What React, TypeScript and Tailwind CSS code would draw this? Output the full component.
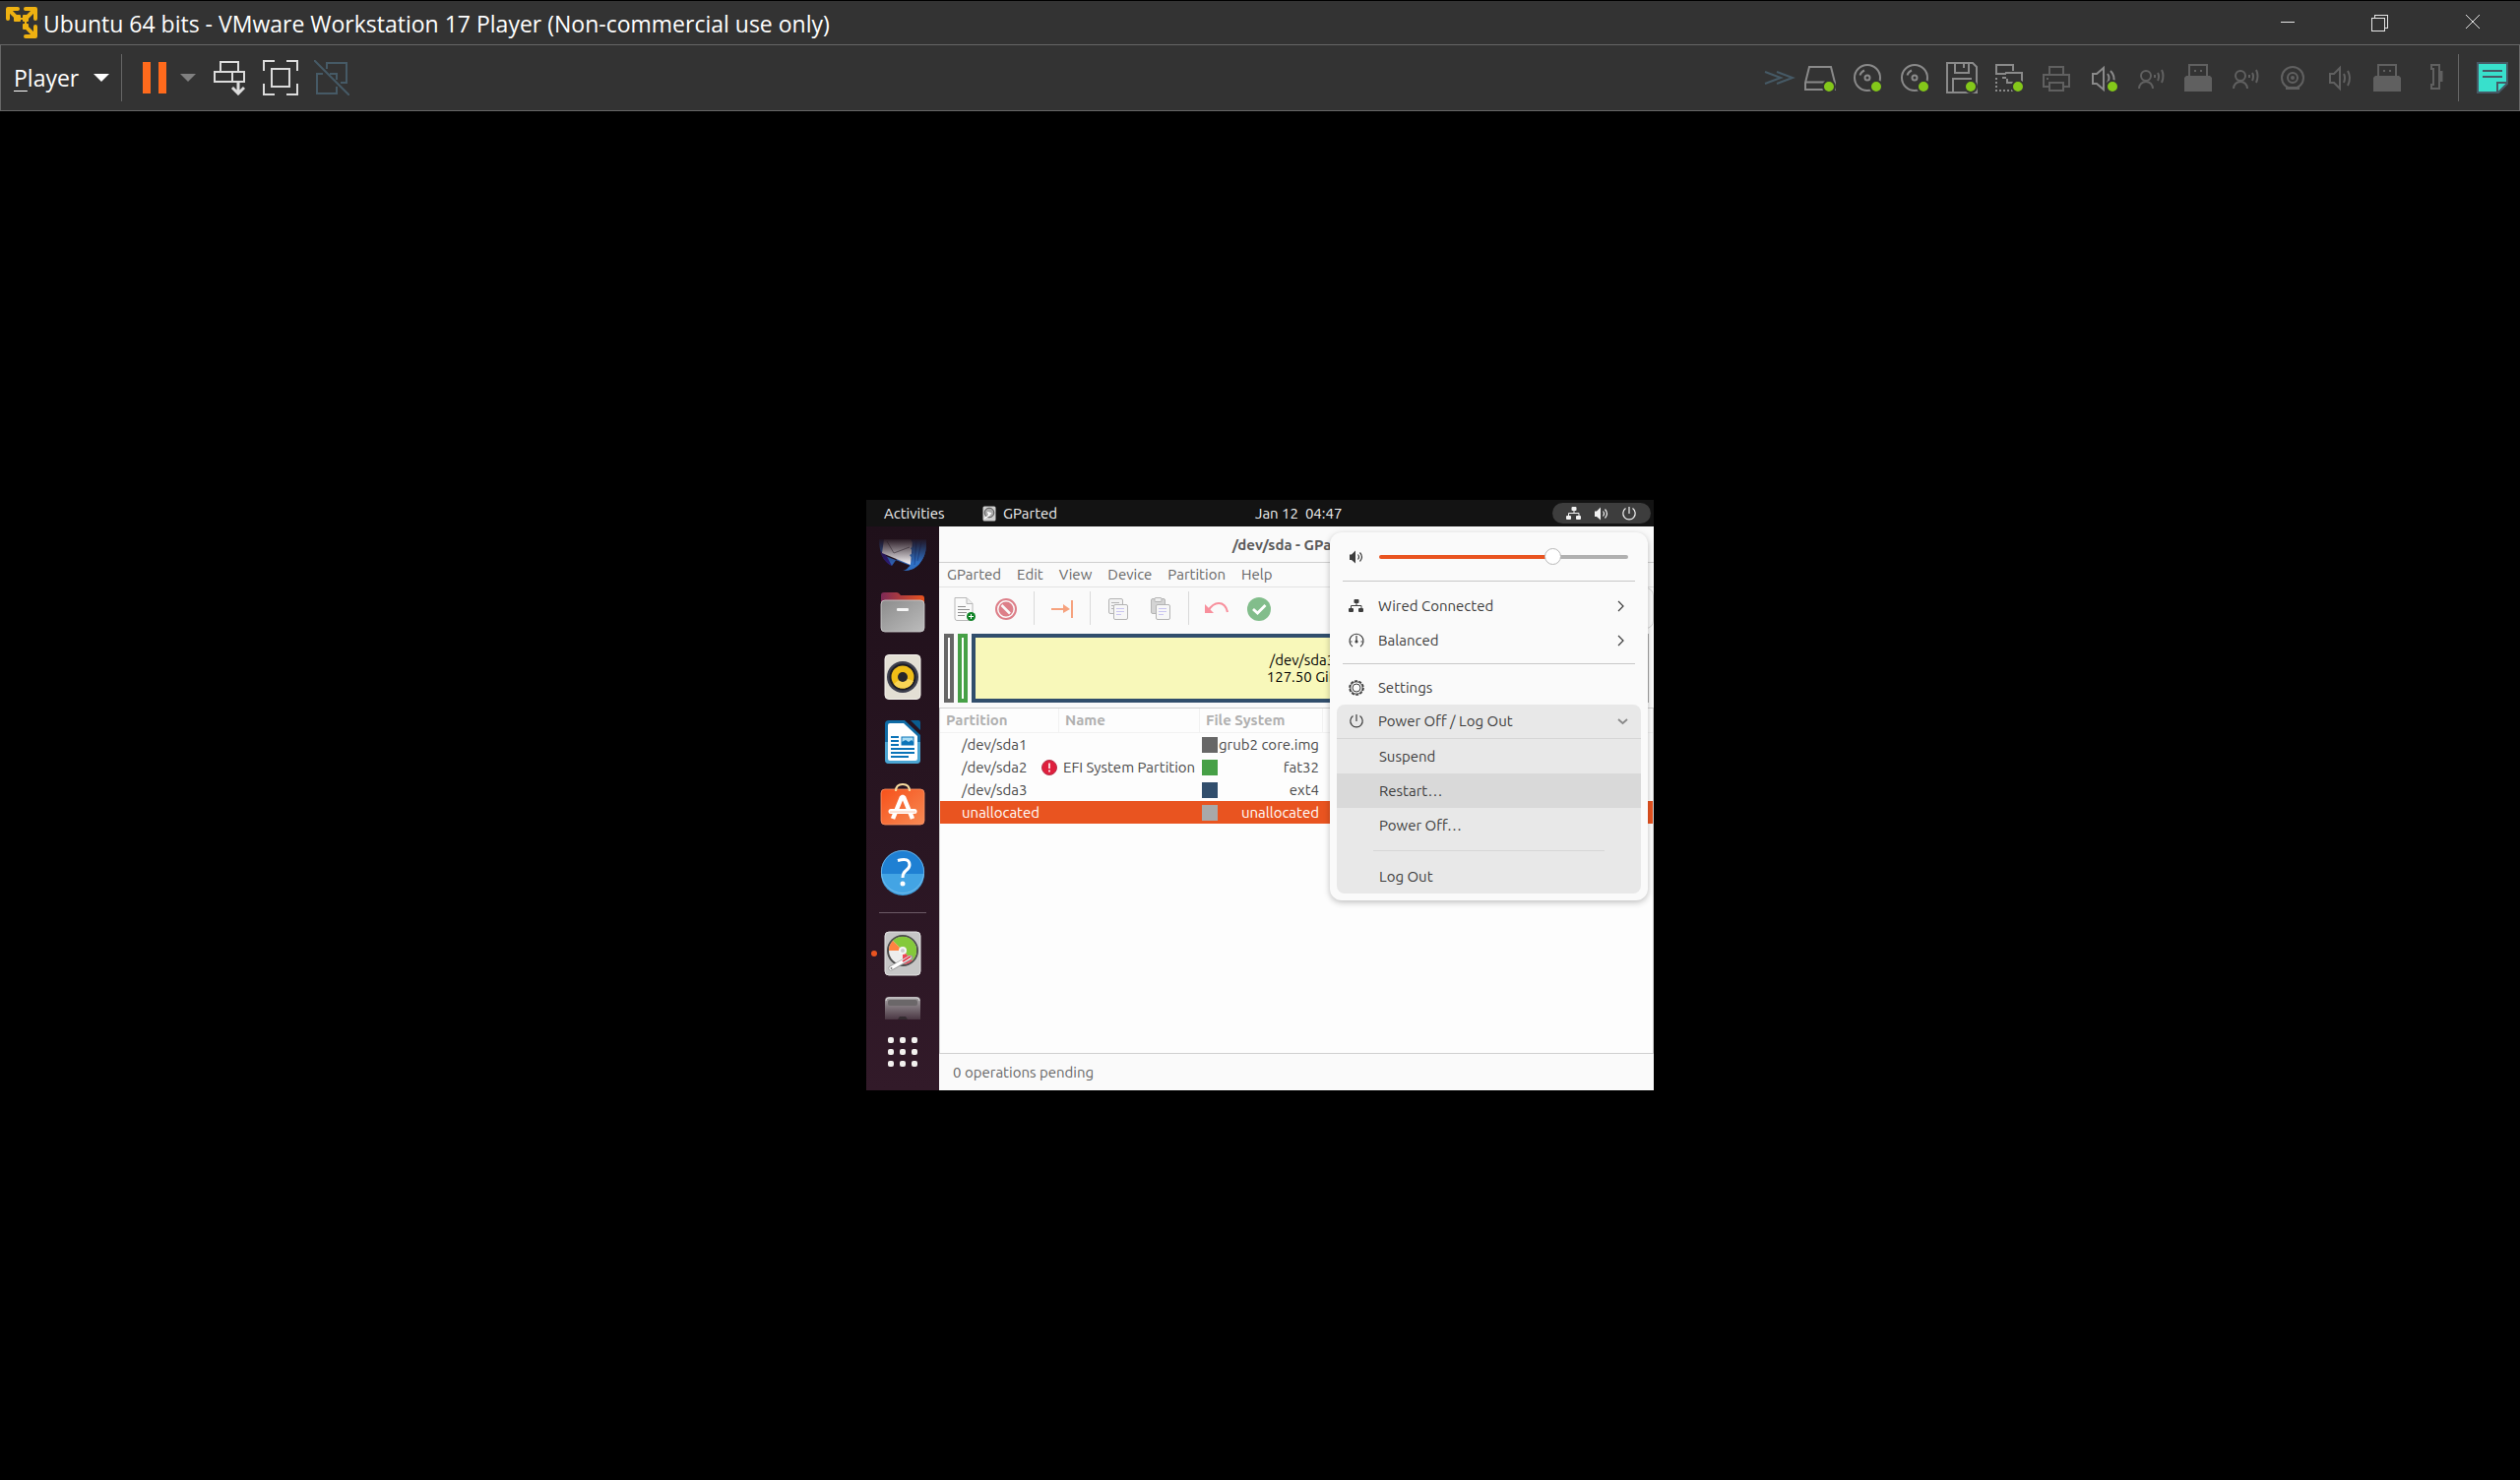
import type { ReactNode } from "react";

const GUEST_FONT = "font-['Ubuntu','Noto_Sans',sans-serif]";

/* ---------- Host window ---------- */

function VmwareLogo() {
  return (
    <svg width="32" height="32" viewBox="0 0 32 32" fill="none" stroke="#eeb111" strokeWidth="4" strokeLinecap="round" strokeLinejoin="round" aria-hidden="true">
      <path d="M2 12V2H12M3 3L10 10M20 2H30V12M29 3L22 10M30 20V30H20M29 29L22 22" />
      <path d="M10 9H14V14H9V10ZM18 9H22V14H18ZM18 18H22V22H18Z" fill="#eeb111" strokeWidth="2" />
      <path d="M14 12H18M20 14V18" strokeWidth="2" />
    </svg>
  );
}

function TitleBar() {
  const button = "flex h-11 w-[94px] items-center justify-center";
  return (
    <header className="flex h-[45px] items-center justify-between border-t border-black bg-[#333] pl-[6px] pr-px">
      <div className="flex items-center gap-[6px]">
        <VmwareLogo />
        <h1 className="whitespace-nowrap pt-px text-[23px] leading-8 text-white">
          Ubuntu 64 bits - VMware Workstation 17 Player (Non-commercial use only)
        </h1>
      </div>
      <div className="flex">
        <button type="button" aria-label="Minimize" className={button}>
          <svg width="18" height="18" fill="none" stroke="#e6e6e6" shapeRendering="crispEdges"><path d="M2 8.500H16" /></svg>
        </button>
        <button type="button" aria-label="Restore" className={button}>
          <svg width="18" height="18" fill="none" stroke="#e6e6e6" shapeRendering="crispEdges"><path d="M.5 4.500H13.500V17.500H.5ZM3.500 4V1.500H16.500V14.500H14" /></svg>
        </button>
        <button type="button" aria-label="Close" className={button}>
          <svg width="18" height="18" fill="none" stroke="#e6e6e6"><path d="M2 1L16 15M16 1L2 15" /></svg>
        </button>
      </div>
    </header>
  );
}

function Dot() {
  return <circle cx="33" cy="33" r="6" fill="#84c81a" stroke="#333" strokeWidth="2" />;
}

const G = "#8a8a8a";
const D = "#606060";

const diskIcon = (
  <g stroke={G} strokeWidth="2" fill="none">
    <path d="M13 13H35L39 29V36H9V29ZM9 28.500H29M9 36H29" />
    <Dot />
  </g>
);
const discIcon = (
  <g stroke={G} strokeWidth="2" fill="none">
    <circle cx="24" cy="24" r="13" />
    <circle cx="24" cy="24" r="2.500" />
    <path d="M16.500 21.500A8 8 0 0 1 21 16.500" />
    <Dot />
  </g>
);
const floppyIcon = (
  <g stroke={G} strokeWidth="2" fill="none">
    <path d="M9 9H35L39 13V39H9ZM17 9V19H31V9M26 10V14M15 39V25H34" />
    <Dot />
  </g>
);
const networkIcon = (
  <g stroke={G} strokeWidth="2" fill="none">
    <path d="M21 20H11V11H28V17M20 19H37V29H22V25M17 24H21" />
    <path d="M11 24V38M14 37H30" strokeDasharray="2 2" />
    <Dot />
  </g>
);
const printerIcon = (
  <g stroke={D} strokeWidth="2" fill="none">
    <path d="M17 20V13H31V20M17 33H11V21H37V33H31M17 29H31V37H17ZM14 25H16" />
  </g>
);
const soundIcon = (
  <g stroke={G} strokeWidth="2" fill="none">
    <path d="M13 20H17L24 14V36L17 30H13Z" />
    <path d="M28 20Q31 24 28 29M31 17Q36 22 34 29" />
    <Dot />
  </g>
);
const voiceIcon = (
  <g stroke={D} strokeWidth="2" fill="none">
    <circle cx="19" cy="22" r="5" />
    <path d="M12 35C12 31 15 28 19 28S26 31 26 35M28 21V24M31 19Q33 22.500 31 27M35 16Q38 22 35 29" />
  </g>
);
const usbIcon = (
  <g fill={D}>
    <path d="M12 22H36L38 24V38H10V24Z" />
    <path d="M15 23V11H33V23" fill="none" stroke={D} strokeWidth="2" />
    <path d="M20 16H22V18H20ZM26 16H28V18H26Z" />
  </g>
);
const cameraIcon = (
  <g stroke={D} strokeWidth="2" fill="none">
    <circle cx="24" cy="24" r="11" />
    <circle cx="24" cy="24" r="5" />
    <circle cx="24" cy="24" r="1" />
    <path d="M17 34.500H31" strokeWidth="3" />
  </g>
);
const speakerIcon = (
  <g stroke={D} strokeWidth="2" fill="none">
    <path d="M14 20H18L24 14V35L18 29H14ZM28 20Q30 24 28 29M32 17Q36 24 32 32" />
  </g>
);
const serialIcon = (
  <g stroke={D} strokeWidth="2" fill="none">
    <path d="M21 11H29V35H21V31H23V15H21Z" />
    <path d="M31 17V28" strokeWidth="3" />
  </g>
);
const moreIcon = (
  <path d="M16 18L32 24L16 30M28 18L44 24L28 30" stroke="#465a66" strokeWidth="2" fill="none" />
);

const devices: { name: string; icon: ReactNode }[] = [
  { name: "More devices", icon: moreIcon },
  { name: "Hard disk", icon: diskIcon },
  { name: "CD/DVD", icon: discIcon },
  { name: "CD/DVD 2", icon: discIcon },
  { name: "Floppy", icon: floppyIcon },
  { name: "Network adapter", icon: networkIcon },
  { name: "Printer", icon: printerIcon },
  { name: "Sound card", icon: soundIcon },
  { name: "Voice input", icon: voiceIcon },
  { name: "USB device", icon: usbIcon },
  { name: "Voice input 2", icon: voiceIcon },
  { name: "Camera", icon: cameraIcon },
  { name: "Speaker", icon: speakerIcon },
  { name: "USB device 2", icon: usbIcon },
  { name: "Serial port", icon: serialIcon },
];

function PlayerToolbar() {
  return (
    <nav aria-label="Player toolbar" className="flex h-[68px] items-center justify-between border border-[#666] bg-[#333]">
      <div className="flex items-center">
        <button type="button" className="flex items-center gap-[15px] pl-[13px] pr-3 text-[23px] leading-8 text-white">
          <span><span className="underline decoration-1 underline-offset-4">P</span>layer</span>
          <svg width="16" height="8" aria-hidden="true"><path d="M0 0H16L8 8Z" fill="#fff" /></svg>
        </button>
        <div className="h-12 w-px bg-[#666]" />
        <button type="button" aria-label="Suspend guest" className="ml-[21px]">
          <svg width="24" height="32"><path d="M0 0H8V32H0ZM16 0H24V32H16Z" fill="#ff6a1c" /></svg>
        </button>
        <button type="button" aria-label="Power options" className="ml-[14px]">
          <svg width="16" height="8"><path d="M0 0H16L8 8Z" fill="#808080" /></svg>
        </button>
        <button type="button" aria-label="Send Ctrl+Alt+Del" className="ml-[18px]">
          <svg width="32" height="36" fill="none" stroke="#dcdcdc" strokeWidth="2">
            <path d="M7 12V2H25V12M1 12H31V22H1ZM19 12V22" />
            <path d="M25 22V33M19 28L25 34L31 28" strokeWidth="3" />
          </svg>
        </button>
        <button type="button" aria-label="Full screen" className="ml-[18px]">
          <svg width="36" height="36" fill="none" stroke="#dcdcdc" strokeWidth="2">
            <path d="M1 11V1H12M24 1H35V11M1 24V35H12M24 35H35V24M9 9H27V27H9Z" />
          </svg>
        </button>
        <button type="button" aria-label="Unity" className="ml-4">
          <svg width="36" height="36" fill="none" stroke="#465a66" strokeWidth="2">
            <path d="M13 9V3H33V23H27M9 14H3V34H23V27M16 14H23V20M0 0L36 36" />
          </svg>
        </button>
      </div>
      <div className="flex items-center">
        {devices.map((d) => (
          <button key={d.name} type="button" aria-label={d.name}>
            <svg width="48" height="48" viewBox="0 0 48 48">{d.icon}</svg>
          </button>
        ))}
        <div className="h-12 w-px bg-[#666]" />
        <button type="button" aria-label="Notes" className="ml-[18px] mr-[11px]">
          <svg width="32" height="32">
            <path d="M1 1H31V22L22 31H1Z" fill="#38e0cc" stroke="#465a66" strokeWidth="2" />
            <path d="M6 9H26M6 15H26M21 30V21H30" fill="none" stroke="#465a66" strokeWidth="2" />
          </svg>
        </button>
      </div>
    </nav>
  );
}

/* ---------- Guest shared icons ---------- */

function WiredIcon() {
  return (
    <svg width="16" height="16" viewBox="0 0 16 16" fill="currentColor" aria-hidden="true">
      <rect x="5.500" y="1" width="5" height="4" rx="1" />
      <rect x="0" y="10" width="5" height="4" rx="1" />
      <rect x="10" y="10" width="5" height="4" rx="1" />
      <path d="M2.500 10V7.500H13V10M8 5V8" fill="none" stroke="currentColor" />
    </svg>
  );
}

function VolumeIcon() {
  return (
    <svg width="16" height="16" viewBox="0 0 16 16" fill="currentColor" aria-hidden="true">
      <path d="M1 5.500H3L7 1.500V14.500L3 11H1Z" />
      <path d="M9.500 5.500Q11.500 8 9.500 10.500M11.500 3.500Q15.500 8 11.500 12.500" fill="none" stroke="currentColor" strokeWidth="1.200" />
    </svg>
  );
}

function PowerIcon() {
  return (
    <svg width="16" height="16" viewBox="0 0 16 16" fill="none" stroke="currentColor" strokeWidth="1.200" aria-hidden="true">
      <path d="M4.500 2.600A6.200 6.200 0 1 0 11.500 2.600M8 1V8" />
    </svg>
  );
}

function BalancedIcon() {
  return (
    <svg width="16" height="16" viewBox="0 0 16 16" fill="none" stroke="currentColor" strokeWidth="1.200" aria-hidden="true">
      <path d="M4 14A7 7 0 1 1 12 14M8 3V9M2 9H3.500M12.500 9H14" />
      <circle cx="8" cy="9" r="1" fill="currentColor" />
    </svg>
  );
}

function GearIcon() {
  return (
    <svg width="16" height="16" viewBox="0 0 16 16" fill="none" stroke="currentColor" aria-hidden="true">
      <circle cx="8" cy="8" r="7" strokeWidth="1.600" strokeDasharray="3 1.400" />
      <circle cx="8" cy="8" r="6.200" />
      <circle cx="8" cy="8" r="4" />
    </svg>
  );
}

/* ---------- Guest top bar ---------- */

function TopBar() {
  return (
    <header className="grid h-[27px] shrink-0 grid-cols-[395px_1fr_auto] items-center bg-[#131313] pr-[3px] text-[15px] leading-5 text-[#f2f2f2]">
      <div className="flex items-center pl-[18px]">
        <button type="button" className="w-[100px] text-left">Activities</button>
        <button type="button" className="flex items-center gap-[7px]">
          <svg width="14" height="16" aria-hidden="true">
            <rect x=".5" y=".5" width="13" height="15" rx="1.500" fill="#cfcfcf" />
            <circle cx="7" cy="7" r="4.800" fill="#aaa" stroke="#555" />
            <path d="M2 13L7 9.500L6 7L9 8" fill="none" stroke="#fff" strokeWidth="1.500" />
          </svg>
          GParted
        </button>
      </div>
      <button type="button" className="justify-self-start whitespace-pre">Jan 12  04:47</button>
      <button type="button" aria-label="System menu" className="flex h-[21px] w-[100px] items-center justify-center gap-3 rounded-full bg-[#3d3d3d]">
        <WiredIcon />
        <VolumeIcon />
        <PowerIcon />
      </button>
    </header>
  );
}

/* ---------- Dock ---------- */

function ThunderbirdIcon() {
  return (
    <svg width="48" height="41" viewBox="0 0 48 41" aria-hidden="true">
      <defs>
        <linearGradient id="tb-fade" x1="0" y1="0" x2="0" y2="1">
          <stop offset="0" stopColor="#1f101a" stopOpacity=".95" />
          <stop offset="1" stopColor="#1f101a" stopOpacity="0" />
        </linearGradient>
      </defs>
      <path d="M0 0H6L4 16L32 27L29 29Q34 29 30 30L24 32Q38 32 43 22Q49 14 48 0H32L13 27Q0 20 0 0Z" fill="#2d5fae" />
      <path d="M1 12Q4 23 13 27L6 14Z" fill="#2c1a72" />
      <path d="M5 0H34L32 26L3 14Z" fill="#ece9ec" />
      <path d="M8 2L15 14L31 8" fill="none" stroke="#8c888e" />
      <path d="M32 0H48Q49 16 41 25Q36 31 26 32Q33 27 34 20L31 16L35 14L32 9L36 7Z" fill="#2f70c4" />
      <path d="M38 2L36 26M43 3L39 22" stroke="#1d4da0" />
      <path d="M0 0H48V24H0Z" fill="url(#tb-fade)" />
    </svg>
  );
}

function FilesIcon() {
  return (
    <svg width="48" height="48" viewBox="0 0 48 48" aria-hidden="true">
      <defs>
        <linearGradient id="files-back"><stop stopColor="#7c2956" /><stop offset="1" stopColor="#e95420" /></linearGradient>
        <linearGradient id="files-front" x2="1" y2="1"><stop stopColor="#8c8c8c" /><stop offset="1" stopColor="#bcbcbc" /></linearGradient>
      </defs>
      <path d="M2 20V7Q2 4 5 4H18Q20 4 22 7H43Q46 7 46 10V20Z" fill="url(#files-back)" />
      <rect x="2" y="12" width="44" height="32" rx="4" fill="url(#files-front)" stroke="#d0d0d0" strokeWidth=".8" />
      <rect x="18" y="20" width="12" height="3" rx="1" fill="#f6f6f6" />
    </svg>
  );
}

function RhythmboxIcon() {
  return (
    <svg width="48" height="48" viewBox="0 0 48 48" aria-hidden="true">
      <rect x="6" y="1.500" width="36" height="45" rx="4" fill="#e3dfd4" stroke="#f5f3ee" />
      <circle cx="24" cy="24" r="16" fill="#3d3f4d" />
      <circle cx="24" cy="24" r="13.500" fill="#1c1c24" />
      <circle cx="24" cy="24" r="11.500" fill="#efbd17" />
      <path d="M15 31A11.500 11.500 0 0 0 35 28L24 24Z" fill="#f8d455" />
      <circle cx="24" cy="24" r="5" fill="#26262a" />
    </svg>
  );
}

function WriterIcon() {
  return (
    <svg width="48" height="48" viewBox="0 0 48 48" aria-hidden="true">
      <path d="M10 2H26L42 17V42Q42 46 38 46H10Q6 46 6 42V6Q6 2 10 2Z" fill="#0f6ba5" />
      <path d="M6 24H42V42Q42 46 38 46H10Q6 46 6 42Z" fill="#4ba5d2" />
      <path d="M11 5H25L39 18V41Q39 43 37 43H11Q9 43 9 41V7Q9 5 11 5Z" fill="#fff" />
      <path d="M32 2H40Q42 2 42 4V12Z" fill="#0a5d8f" />
      <path d="M12 19H20M12 23H20M12 27H20M12 31H36M12 35H36M12 39H30" stroke="#0b74b8" strokeWidth="2" />
      <rect x="23" y="19" width="12" height="8" fill="#a9dcf5" stroke="#0b74b8" />
      <path d="M23 27V24L27 22L30 24L33 22L35 24V27Z" fill="#0b74b8" />
    </svg>
  );
}

function SoftwareIcon() {
  return (
    <svg width="48" height="48" viewBox="0 0 48 48" aria-hidden="true">
      <defs><linearGradient id="soft" y2="1" x2="1"><stop stopColor="#f7511a" /><stop offset="1" stopColor="#f68a54" /></linearGradient></defs>
      <rect x="2" y="6" width="44" height="36" rx="4" fill="url(#soft)" stroke="#fb9468" strokeWidth=".8" />
      <path d="M17 8Q17 1 24 1T31 8" fill="none" stroke="#f8dca0" strokeWidth="2" />
      <path d="M14 36L23 14H25L34 36" fill="none" stroke="#fff" strokeWidth="4.500" strokeLinejoin="bevel" />
      <path d="M12 28.500H36" stroke="#fff" strokeWidth="5" strokeLinecap="round" />
      <path d="M11 29H37" stroke="#fbc6ae" />
    </svg>
  );
}

function HelpIcon() {
  return (
    <svg width="48" height="48" viewBox="0 0 48 48" aria-hidden="true">
      <circle cx="24" cy="24" r="22" fill="#1f80d3" />
      <path d="M2 26H46A22 22 0 0 1 2 26Z" fill="#43a4e4" />
      <circle cx="24" cy="24" r="21.600" fill="none" stroke="#7cc0ee" strokeWidth=".8" />
      <path d="M19 12.500Q31 9 31 17Q31 20 27 23Q24 25.500 24 30" fill="none" stroke="#fff" strokeWidth="3" />
      <circle cx="24" cy="36" r="2.500" fill="#fff" />
    </svg>
  );
}

function GPartedIcon() {
  return (
    <svg width="48" height="48" viewBox="0 0 48 48" aria-hidden="true">
      <rect x="6" y="2" width="36" height="44" rx="4" fill="#c6c6c6" stroke="#e4e4e4" />
      <circle cx="24" cy="21" r="15" fill="#ededed" stroke="#4c4c4c" strokeWidth="2" />
      <path d="M24 21L14 11A14 14 0 1 1 34 31Z" fill="#84c93a" />
      <path d="M24 21H10A14 14 0 0 1 14 11Z" fill="#ff8340" />
      <path d="M24 21L34 31A14 14 0 0 1 24 35Z" fill="#ef4654" />
      <circle cx="24" cy="21" r="4" fill="#f5f5f5" />
      <circle cx="24" cy="21" r="2" fill="#ccc" />
      <path d="M12 39L32 28" stroke="#999" strokeWidth="5" strokeLinecap="round" />
      <path d="M12 39L31 28" stroke="#fff" strokeWidth="3.500" strokeLinecap="round" />
      <path d="M24 32L32 27" stroke="#e33b4a" strokeWidth="2" />
      <circle cx="12.500" cy="39" r="1" fill="#777" />
    </svg>
  );
}

function TrashIcon() {
  return (
    <svg width="48" height="34" viewBox="0 0 48 34" aria-hidden="true">
      <defs><linearGradient id="trash" x2="0" y2="1"><stop stopColor="#a8a5a7" /><stop offset="1" stopColor="#4a3743" /></linearGradient></defs>
      <path d="M6 34V15Q6 11 10 11H38Q42 11 42 15V34Z" fill="url(#trash)" />
      <path d="M7 15Q7 12 10 12H38Q41 12 41 15" fill="none" stroke="#d8d6d7" />
      <rect x="9" y="14" width="30" height="6" rx="2" fill="#6b6769" />
      <path d="M19 34L21 31H27L29 34Z" fill="#332b30" />
    </svg>
  );
}

function Dock() {
  const slot = "flex h-[66px] w-full shrink-0 items-center justify-center";
  return (
    <nav aria-label="Dock" className="flex w-[74px] shrink-0 flex-col items-center bg-linear-to-b from-[#1f101a] to-[#321a29] pt-[13px]">
      <button type="button" aria-label="Thunderbird"><ThunderbirdIcon /></button>
      <button type="button" aria-label="Files" className={slot}><FilesIcon /></button>
      <button type="button" aria-label="Rhythmbox" className={slot}><RhythmboxIcon /></button>
      <button type="button" aria-label="LibreOffice Writer" className={slot}><WriterIcon /></button>
      <button type="button" aria-label="Ubuntu Software" className={slot}><SoftwareIcon /></button>
      <button type="button" aria-label="Help" className={slot}><HelpIcon /></button>
      <div className="my-2 h-px w-12 shrink-0 bg-[#6b5a65]" />
      <button type="button" aria-label="GParted" className={slot + " relative"}>
        <span className="absolute left-[5px] top-[30px] size-[6px] rounded-full bg-[#e95420]" />
        <GPartedIcon />
      </button>
      <button type="button" aria-label="Trash"><TrashIcon /></button>
      <button type="button" aria-label="Show applications" className="mt-[18px] grid grid-cols-3 gap-[6px]">
        {Array.from({ length: 9 }, (_, i) => (
          <span key={i} className="size-[6px] rounded-[2px] bg-[#f2f0ee]" />
        ))}
      </button>
    </nav>
  );
}

/* ---------- GParted window ---------- */

function CopyShape({ clip }: { clip?: boolean }) {
  return (
    <svg width="24" height="24" viewBox="0 0 24 24" fill="#f7f7f7" stroke="#b4b4b4" aria-hidden="true">
      <rect x="2.500" y="1.500" width="14" height="15" rx="1.500" fill={clip ? "#d4d4d4" : "#f2f2f2"} />
      {clip ? <rect x="6" y=".5" width="7" height="4" rx="1" fill="#eee" /> : <path d="M5 5.500H13M5 8.500H8M5 11.500H8" />}
      <rect x="7.500" y="7.500" width="14" height="15" rx="1.500" />
      <path d="M10 11.500H18M10 14.500H18M10 17.500H15" stroke="#c9c5f0" />
    </svg>
  );
}

function ToolButton({ label, children }: { label: string; children: ReactNode }) {
  return (
    <button type="button" aria-label={label} className="flex h-9 w-[43px] items-center justify-center">
      {children}
    </button>
  );
}

function ToolSeparator() {
  return <div className="ml-[7px] mr-[6px] h-[34px] w-px bg-[#dadada]" />;
}

function GPartedToolbar() {
  return (
    <div role="toolbar" aria-label="GParted tools" className="flex h-[47px] items-start pl-[3px] pt-1">
      <ToolButton label="New partition">
        <svg width="24" height="24" viewBox="0 0 24 24" aria-hidden="true">
          <path d="M3 .5H15L21 6.500V21Q21 23.500 19 23.500H5Q3 23.500 3 21Z" fill="#fafafa" stroke="#b8b8b8" />
          <path d="M15 1V6.500H21" fill="#eee" stroke="#b8b8b8" />
          <path d="M6 9.500H14M6 12.500H18M6 15.500H15M6 18.500H13" stroke="#8f8f8f" />
          <circle cx="19.500" cy="19.500" r="4.500" fill="#0f8326" />
          <path d="M17 19.500H22M19.500 17V22" stroke="#fff" />
        </svg>
      </ToolButton>
      <ToolButton label="Delete">
        <svg width="24" height="24" viewBox="0 0 24 24" fill="none" aria-hidden="true">
          <circle cx="12" cy="12" r="10" stroke="#dd7f89" strokeWidth="2" />
          <circle cx="12" cy="12" r="7.500" fill="#dd7f89" />
          <path d="M7.500 8L16 16.500" stroke="#fafafa" strokeWidth="2.500" />
        </svg>
      </ToolButton>
      <ToolSeparator />
      <ToolButton label="Resize/Move">
        <svg width="24" height="24" viewBox="0 0 24 24" fill="#f6a27e" aria-hidden="true">
          <path d="M1 11H13V7L20 12L13 16V13H1ZM21 3H23V21H21Z" />
        </svg>
      </ToolButton>
      <ToolSeparator />
      <ToolButton label="Copy"><CopyShape /></ToolButton>
      <ToolButton label="Paste"><CopyShape clip /></ToolButton>
      <ToolSeparator />
      <ToolButton label="Undo">
        <svg width="24" height="24" viewBox="0 0 24 24" aria-hidden="true">
          <path d="M3 14Q8 6 14 6Q21 6 23 15" fill="none" stroke="#f88f9c" strokeWidth="2.200" />
          <path d="M0 7V16H9Z" fill="#f88f9c" />
        </svg>
      </ToolButton>
      <ToolButton label="Apply">
        <svg width="24" height="24" viewBox="0 0 24 24" fill="none" aria-hidden="true">
          <circle cx="12" cy="12" r="12" fill="#82bd8b" />
          <path d="M6 12L10.500 16L18.500 8" stroke="#fff" strokeWidth="2.800" />
        </svg>
      </ToolButton>
      <div className="-mt-1 ml-auto h-[42px] w-40 rounded-lg border border-[#d4d4d4]" />
    </div>
  );
}

const partitions = [
  { path: "/dev/sda1", name: "", fs: "grub2 core.img", swatch: "bg-[#676767]", warn: false, selected: false },
  { path: "/dev/sda2", name: "EFI System Partition", fs: "fat32", swatch: "bg-[#46a046]", warn: true, selected: false },
  { path: "/dev/sda3", name: "", fs: "ext4", swatch: "bg-[#314e6c]", warn: false, selected: false },
  { path: "unallocated", name: "", fs: "unallocated", swatch: "bg-[#a9a9a9]", warn: false, selected: true },
];

function PartitionTable() {
  const th = "border-b border-r border-[#f2f2f2] p-0 pl-[6px] font-bold";
  return (
    <table className="w-full table-fixed border-separate border-spacing-0 text-left text-[15px] leading-5 text-[#4a4a4a]">
      <colgroup>
        <col className="w-[121px]" />
        <col className="w-[143px]" />
        <col className="w-[125px]" />
        <col />
      </colgroup>
      <thead>
        <tr className="h-[25px] text-[#b0b0b0]">
          <th scope="col" className={th}>Partition</th>
          <th scope="col" className={th}>Name</th>
          <th scope="col" className={th}>File System</th>
          <td className="border-b border-[#f2f2f2]" />
        </tr>
      </thead>
      <tbody>
        {partitions.map((p) => (
          <tr key={p.path} className={p.selected ? "h-[23px] bg-[#e95420] text-white" : "h-[23px]"}>
            <td className="p-0 pl-[22px]">
              <div className="flex items-center justify-between pr-[2px]">
                {p.path}
                {p.warn && (
                  <svg width="16" height="16" role="img" aria-label="Warning">
                    <circle cx="8" cy="8" r="7.500" fill="#df1f3d" stroke="#b4324a" />
                    <path d="M8 3.500V9M8 10.500V12.500" stroke="#fff" strokeWidth="1.600" />
                  </svg>
                )}
              </div>
            </td>
            <td className="whitespace-nowrap p-0 pl-1">{p.name}</td>
            <td className="p-0">
              <div className="flex items-center justify-between whitespace-nowrap pl-[2px] pr-1">
                <span className={"size-4 shrink-0 " + p.swatch} />
                {p.fs}
              </div>
            </td>
            <td />
          </tr>
        ))}
      </tbody>
    </table>
  );
}

function GPartedWindow() {
  return (
    <main className="flex min-w-0 flex-1 flex-col bg-[#fafafa] text-[15px] leading-5 text-[#666]">
      <h2 className="h-[37px] border-b border-[#cfcfcf] pt-[9px] text-center font-bold text-[#5c5c5c]">/dev/sda - GParted</h2>
      <div role="menubar" className="flex h-[25px] items-center gap-4 border-b border-[#e2e2e2] pl-2">
        {["GParted", "Edit", "View", "Device", "Partition", "Help"].map((m) => (
          <button key={m} type="button" role="menuitem">{m}</button>
        ))}
      </div>
      <GPartedToolbar />
      <div className="flex h-[70px] gap-1 px-[5px]">
        <div className="w-[10px] border-4 border-[#676767] bg-white" />
        <div className="w-[10px] border-4 border-[#46a046] bg-white" />
        <div className="flex flex-1 flex-col items-center justify-center border-4 border-[#314e6c] bg-[#f8f8ba] leading-[17px] text-black">
          <span>/dev/sda3</span>
          <span>127.50 GiB</span>
        </div>
        <div className="w-3 border border-[#a9a9a9] bg-[#a9a9a9]" />
      </div>
      <div className="mt-[5px] flex-1 border border-[#cfcfcf] bg-[#fdfdfd]">
        <PartitionTable />
      </div>
      <footer className="flex h-[37px] items-center pl-[14px]">0 operations pending</footer>
    </main>
  );
}

/* ---------- System menu ---------- */

function MenuRow({ icon, label, arrow }: { icon: ReactNode; label: string; arrow?: boolean }) {
  return (
    <button type="button" role="menuitem" className="flex h-[35px] w-full items-center pl-3 pr-[15px]">
      {icon}
      <span className="ml-[14px] flex-1 text-left">{label}</span>
      {arrow && (
        <svg width="10" height="12" fill="none" stroke="currentColor" strokeWidth="1.200" aria-hidden="true"><path d="M2 1L7 6L2 11" /></svg>
      )}
    </button>
  );
}

function SystemMenu() {
  return (
    <div role="menu" aria-label="System menu" className="absolute right-[6px] top-[33px] w-[323px] rounded-xl bg-[#fafafa] p-[7px] text-[15px] leading-5 text-[#3d3d3d] shadow-[0_2px_6px_rgba(0,0,0,0.25)]">
      <label className="flex h-[35px] items-center gap-[15px] pl-3 pr-[13px]">
        <VolumeIcon />
        <input
          type="range"
          aria-label="Volume"
          min={0}
          max={100}
          defaultValue={71}
          className="h-1 min-w-0 flex-1 appearance-none rounded-full bg-linear-to-r from-[#e95420] from-70% to-[#b0b0b0] to-70% [&::-webkit-slider-thumb]:size-[17px] [&::-webkit-slider-thumb]:appearance-none [&::-webkit-slider-thumb]:rounded-full [&::-webkit-slider-thumb]:border [&::-webkit-slider-thumb]:border-[#b8b8b8] [&::-webkit-slider-thumb]:bg-white"
        />
      </label>
      <hr className="mx-[6px] my-[7px] border-[#c8c8c8]" />
      <MenuRow icon={<WiredIcon />} label="Wired Connected" arrow />
      <MenuRow icon={<BalancedIcon />} label="Balanced" arrow />
      <hr className="mx-[6px] my-[6px] border-[#c8c8c8]" />
      <MenuRow icon={<GearIcon />} label="Settings" />
      <div className="overflow-hidden rounded-lg bg-[#e8e8e8] text-left">
        <button type="button" role="menuitem" aria-expanded="true" className="flex h-[35px] w-full items-center border-b border-[#d6d6d6] pl-3 pr-[13px]">
          <PowerIcon />
          <span className="ml-[14px] flex-1 text-left">Power Off / Log Out</span>
          <svg width="11" height="8" fill="none" stroke="#888" strokeWidth="1.800" aria-hidden="true"><path d="M1 2L5.500 6L10 2" /></svg>
        </button>
        <button type="button" role="menuitem" className="block h-[35px] w-full pl-[43px] text-left">Suspend</button>
        <button type="button" role="menuitem" className="block h-[35px] w-full bg-[#d9d9d9] pl-[43px] text-left">Restart…</button>
        <button type="button" role="menuitem" className="block h-[35px] w-full pl-[43px] text-left">Power Off…</button>
        <hr className="mx-[37px] my-2 border-[#d6d6d6]" />
        <button type="button" role="menuitem" className="block h-[35px] w-full pl-[43px] text-left">Log Out</button>
      </div>
    </div>
  );
}

export default function App() {
  return (
    <div className="flex min-h-screen flex-col bg-black font-['Segoe_UI','Open_Sans',sans-serif]">
      <TitleBar />
      <PlayerToolbar />
      <div className="flex flex-1 items-center justify-center pb-px">
        <section aria-label="Guest display" className={"relative flex h-[600px] w-[800px] flex-col overflow-hidden " + GUEST_FONT}>
          <TopBar />
          <div className="flex min-h-0 flex-1">
            <Dock />
            <GPartedWindow />
          </div>
          <SystemMenu />
        </section>
      </div>
    </div>
  );
}
